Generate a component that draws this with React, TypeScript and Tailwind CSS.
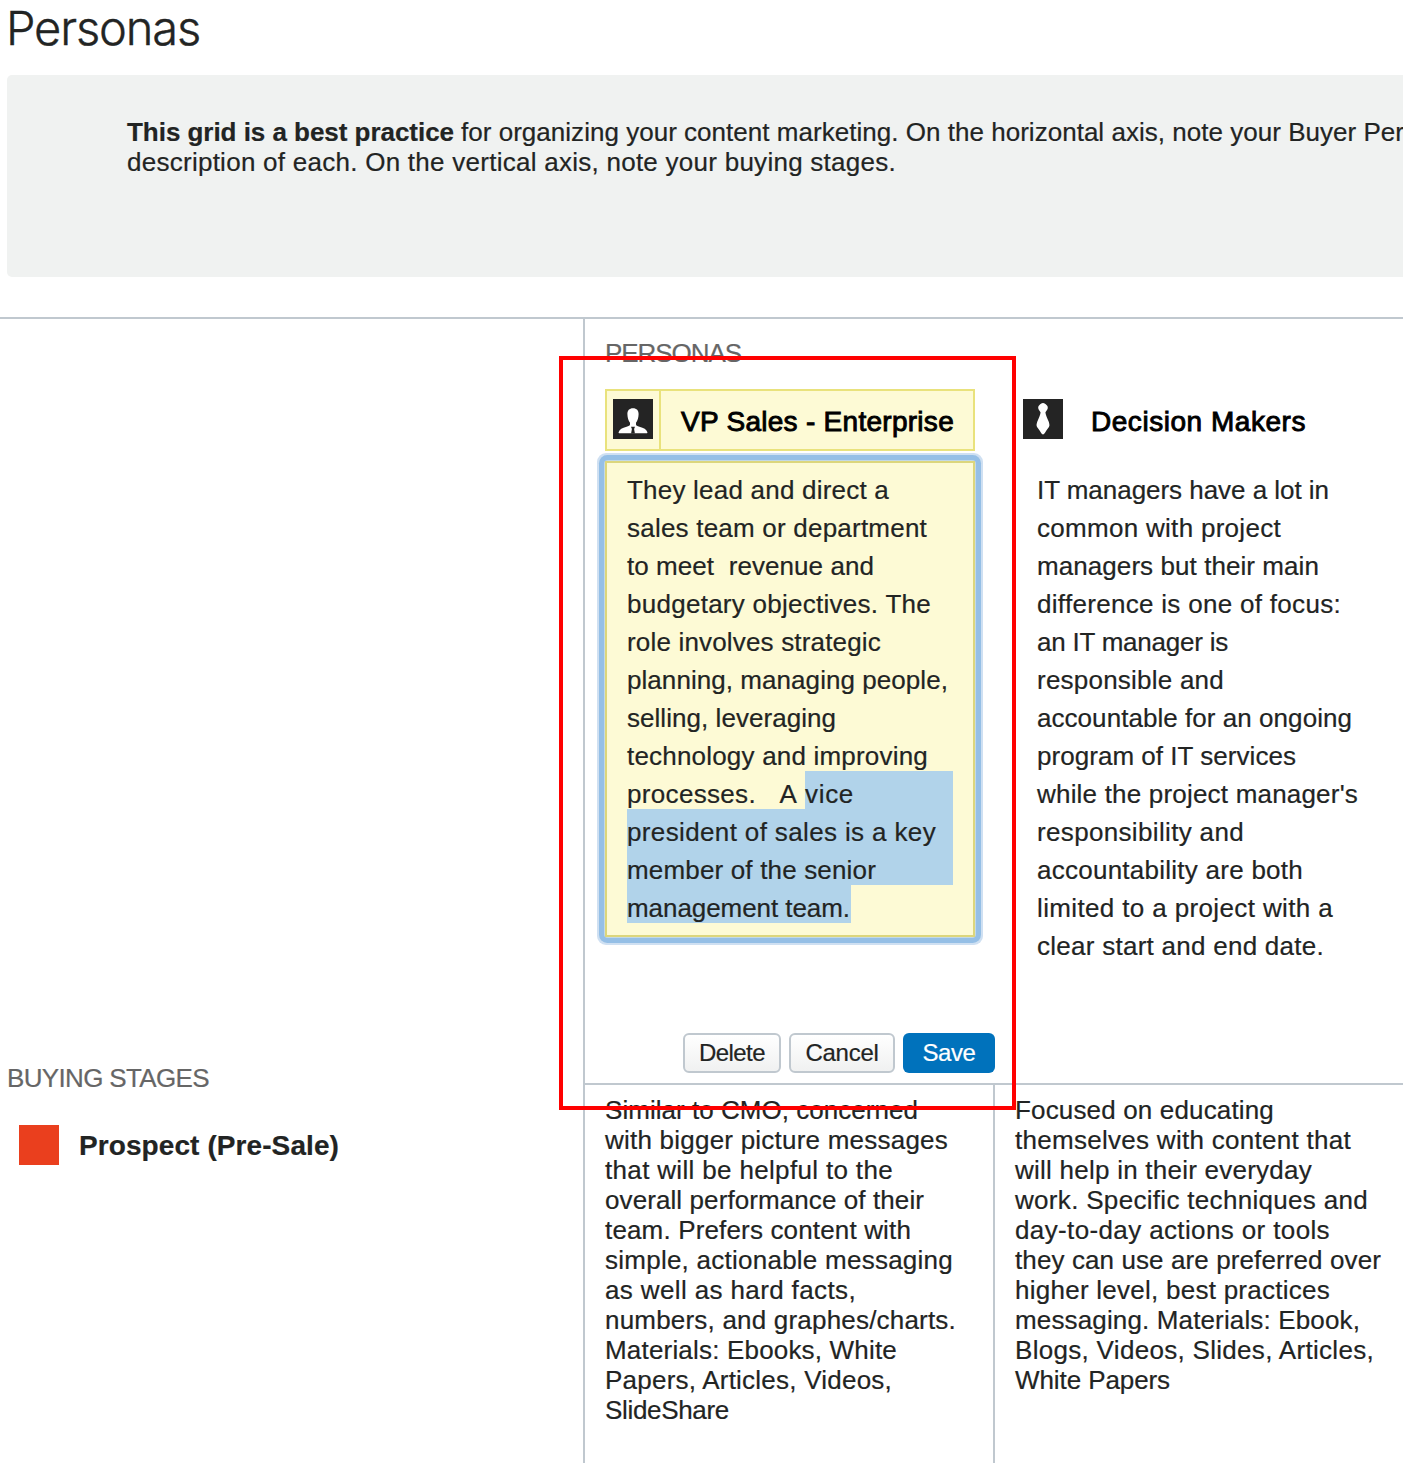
import { useLayoutEffect, useRef, type ReactNode } from "react";

/** A single line of text whose tracking is adjusted so it fills the given width. */
function Line({ w, className = "", children }: { w: number; className?: string; children: string }) {
  const ref = useRef<HTMLSpanElement>(null);
  useLayoutEffect(() => {
    const el = ref.current;
    if (!el) return;
    el.style.letterSpacing = "0px";
    const natural = el.getBoundingClientRect().width;
    el.style.letterSpacing = `${(w - natural) / children.length}px`;
  }, [w, children]);
  return (
    <span ref={ref} className={`inline-block whitespace-pre ${className}`}>
      {children}
    </span>
  );
}

type TextLine = [string, number];

const vpLines: TextLine[] = [
  ["They lead and direct a", 262],
  ["sales team or department", 300],
  ["to meet  revenue and", 247],
  ["budgetary objectives. The", 304],
  ["role involves strategic", 254],
  ["planning, managing people,", 321],
  ["selling, leveraging", 209],
  ["technology and improving", 301],
];

const decisionLines: TextLine[] = [
  ["IT managers have a lot in", 292],
  ["common with project", 244],
  ["managers but their main", 282],
  ["difference is one of focus:", 304],
  ["an IT manager is", 191],
  ["responsible and", 187],
  ["accountable for an ongoing", 315],
  ["program of IT services", 259],
  ["while the project manager's", 321],
  ["responsibility and", 207],
  ["accountability are both", 266],
  ["limited to a project with a", 296],
  ["clear start and end date.", 287],
];

const vpProspect: TextLine[] = [
  ["Similar to CMO, concerned", 313],
  ["with bigger picture messages", 343],
  ["that will be helpful to the", 288],
  ["overall performance of their", 319],
  ["team. Prefers content with", 306],
  ["simple, actionable messaging", 348],
  ["as well as hard facts,", 251],
  ["numbers, and graphes/charts.", 351],
  ["Materials: Ebooks, White", 292],
  ["Papers, Articles, Videos,", 287],
  ["SlideShare", 124],
];

const decisionProspect: TextLine[] = [
  ["Focused on educating", 259],
  ["themselves with content that", 336],
  ["will help in their everyday", 297],
  ["work. Specific techniques and", 353],
  ["day-to-day actions or tools", 315],
  ["they can use are preferred over", 366],
  ["higher level, best practices", 315],
  ["messaging. Materials: Ebook,", 345],
  ["Blogs, Videos, Slides, Articles,", 359],
  ["White Papers", 155],
];

function Row({ children, className = "" }: { children: ReactNode; className?: string }) {
  return <div className={`h-[38px] text-[26px] leading-[46px] whitespace-nowrap ${className}`}>{children}</div>;
}

function PersonIcon() {
  return (
    <svg viewBox="0 0 40 40" className="size-10 shrink-0 bg-[#242424]">
      <path
        fill="#fff"
        d="M20 9.300c-3.700 0-5.700 2.300-5.600 6 .1 3.400 1 6.300 2.600 8.400v1.700c0 1.100-1.300 1.700-3.400 2.300-4.500 1.200-7 2.600-7.900 5.200-.3.900 0 1.400.9 1.400h26.800c.9 0 1.200-.5.900-1.400-.9-2.600-3.400-4-7.900-5.200-2.100-.6-3.400-1.200-3.400-2.300v-1.700c1.600-2.100 2.500-5 2.600-8.400.1-3.700-1.900-6-5.600-6z"
      />
      <path fill="#242424" d="M18 27.700h4l-.9 2.300.8 4.500h-3.800l.8-4.500z" />
    </svg>
  );
}

function TieIcon() {
  return (
    <svg viewBox="0 0 40 40" className="size-10 shrink-0 bg-[#242424]" fill="#fff">
      <path d="M20 4c1.700 0 2.500 1.200 3.500 2 1.100.9 1.500 2.200 1.200 3.500-.3 1.500-1.700 2.500-2.300 4 .4 2.800 1.700 5.500 2.800 8 .8 1.800 1.400 3.800 1.200 5.300-.3 1.700-1.900 2.900-3 4.600-1 1.600-2 3.700-3.400 4.100-1.400-.4-2.400-2.500-3.400-4.100-1.100-1.700-2.700-2.900-3-4.600-.2-1.500.4-3.500 1.200-5.300 1.100-2.500 2.400-5.200 2.800-8-.6-1.500-2-2.500-2.300-4-.3-1.300.1-2.600 1.200-3.500 1-.8 1.800-2 3.500-2z" />
    </svg>
  );
}

function StageCell({ lines, className }: { lines: TextLine[]; className: string }) {
  return (
    <div className={`pt-[10px] ${className}`}>
      {lines.map(([t, w]) => (
        <div key={t} className="h-[30px] text-[26px] leading-[30px] whitespace-nowrap">
          <Line w={w}>{t}</Line>
        </div>
      ))}
    </div>
  );
}

const medium = "[-webkit-text-stroke:0.9px_#000]";

export default function App() {
  return (
    <div className="relative flex h-[1463px] w-[1403px] flex-col overflow-hidden bg-white font-['Liberation_Sans',Arial,sans-serif] text-[#222423] [-webkit-text-stroke:0.2px_currentColor]">
      <h1 className="h-[75px] shrink-0 pl-[6px] font-['Inter',sans-serif] text-[47px] leading-[56px] font-light [-webkit-text-stroke:0.4px_currentColor]">
        <Line w={194}>Personas</Line>
      </h1>

      <section className="ml-[7px] h-[202px] shrink-0 rounded-l-[5px] bg-[#f0f2f1] pt-[42px] pl-[120px] text-[26px] leading-[30px]">
        <div className="flex h-[30px] gap-[7px] whitespace-nowrap">
          <strong className="font-bold">
            <Line w={327}>This grid is a best practice</Line>
          </strong>
          <Line w={943}>for organizing your content marketing. On the horizontal axis, note your Buyer Per</Line>
        </div>
        <div className="h-[30px]">
          <Line w={769}>description of each. On the vertical axis, note your buying stages.</Line>
        </div>
      </section>

      <main className="mt-10 flex grow border-t-2 border-[#c0c8cf]">
        <aside className="w-[583px] shrink-0 pt-[744px]">
          <h2 className="h-[30px] pl-[7px] text-[26px] leading-[30px] text-[#666]">
            <Line w={202}>BUYING STAGES</Line>
          </h2>
          <div className="mt-8 flex h-10 items-center gap-5 pl-[19px]">
            <span className="size-10 bg-[#ea3f1e]" />
            <span className="pt-[2px] text-[28px] leading-8 font-bold">
              <Line w={260}>Prospect (Pre-Sale)</Line>
            </span>
          </div>
        </aside>

        <div className="flex grow flex-col border-l-2 border-[#c0c8cf]">
          <div className="flex h-[764px] shrink-0 flex-col pt-[19px] pl-5">
            <h2 className="h-[30px] text-[26px] leading-[30px] text-[#666]">
              <Line w={136}>PERSONAS</Line>
            </h2>

            <div className="mt-[21px] flex grow">
              <div className="flex w-[410px] shrink-0 flex-col">
                <div className="flex h-[62px] w-[370px] border-2 border-[#e9e27c] bg-[#fdfad5]">
                  <div className="w-[54px] border-r-2 border-[#e9e27c] pt-2 pl-[6px]">
                    <PersonIcon />
                  </div>
                  <div className={`pt-[15px] pl-5 text-[28px] leading-8 text-black ${medium}`}>
                    <Line w={273}>VP Sales - Enterprise</Line>
                  </div>
                </div>
                <div className="mt-[10px] w-[370px] rounded-[3px] shadow-[0_0_0_1px_#c3d9e6,0_0_0_6px_#95bfe6,0_0_0_8px_#cfe0f2]">
                  <div className="h-[476px] border-2 border-[#dcd67c] bg-[#fdfad5] px-5 pt-1">
                    {vpLines.map(([t, w]) => (
                      <Row key={t}>
                        <Line w={w}>{t}</Line>
                      </Row>
                    ))}
                    <Row className="flex">
                      <Line w={129}>processes.</Line>
                      <Line w={49}>{"   A "}</Line>
                      <span className="grow bg-[#b1d3ea]">
                        <Line w={49}>vice</Line>
                      </span>
                    </Row>
                    <Row className="bg-[#b1d3ea]">
                      <Line w={309}>president of sales is a key</Line>
                    </Row>
                    <Row className="bg-[#b1d3ea]">
                      <Line w={249}>member of the senior</Line>
                    </Row>
                    <Row className="w-[224px] bg-[#b1d3ea]">
                      <Line w={223}>management team.</Line>
                    </Row>
                  </div>
                </div>
                <div className="mt-24 flex h-10 w-[390px] justify-end gap-2 text-[24px] leading-[35px]">
                  <button className="flex w-[98px] justify-center rounded-[6px] border-2 border-[#c0c8cf] bg-linear-to-b from-white to-[#f0f1f1]">
                    <Line w={66}>Delete</Line>
                  </button>
                  <button className="flex w-[106px] justify-center rounded-[6px] border-2 border-[#c0c8cf] bg-linear-to-b from-white to-[#f0f1f1]">
                    <Line w={73}>Cancel</Line>
                  </button>
                  <button className="flex w-[92px] justify-center rounded-[6px] bg-[#0072bc] pt-[2px] text-white">
                    <Line w={53}>Save</Line>
                  </button>
                </div>
              </div>

              <div className="w-[388px] shrink-0">
                <div className="flex h-[62px] pt-[10px] pl-2">
                  <TieIcon />
                  <div className={`pt-[7px] pl-7 text-[28px] leading-8 text-black ${medium}`}>
                    <Line w={215}>Decision Makers</Line>
                  </div>
                </div>
                <div className="pt-4 pl-[22px]">
                  {decisionLines.map(([t, w]) => (
                    <Row key={t}>
                      <Line w={w}>{t}</Line>
                    </Row>
                  ))}
                </div>
              </div>
            </div>
          </div>

          <div className="flex grow border-t-2 border-[#c0c8cf]">
            <StageCell lines={vpProspect} className="w-[408px] shrink-0 pl-5" />
            <StageCell lines={decisionProspect} className="grow border-l-2 border-[#c0c8cf] pl-5" />
          </div>
        </div>
      </main>

      <div className="pointer-events-none absolute top-[356px] left-[559px] h-[754px] w-[457px] border-4 border-[#f00]" />
    </div>
  );
}
